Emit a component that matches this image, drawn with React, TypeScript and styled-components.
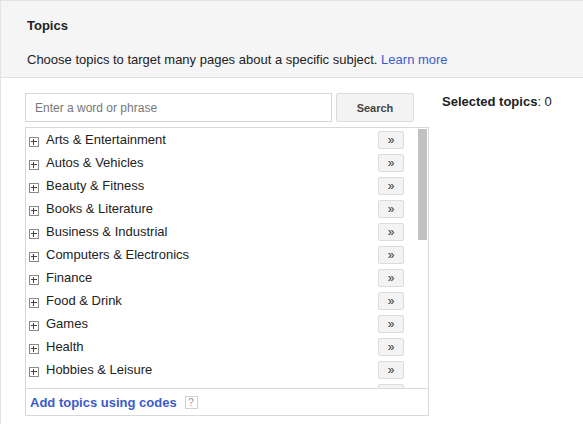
import React from "react";
import styled, { createGlobalStyle } from "styled-components";

const GlobalStyle = createGlobalStyle`
  html, body {
    margin: 0;
    padding: 0;
    background: #fff;
    overflow: hidden;
  }
  body {
    font-family: Arial, "Liberation Sans", sans-serif;
    color: #222;
  }
`;

const topics = [
  "Arts & Entertainment",
  "Autos & Vehicles",
  "Beauty & Fitness",
  "Books & Literature",
  "Business & Industrial",
  "Computers & Electronics",
  "Finance",
  "Food & Drink",
  "Games",
  "Health",
  "Hobbies & Leisure",
  "Home & Garden",
  "Internet & Telecom",
  "Jobs & Education",
  "Law & Government",
  "News",
  "Online Communities",
  "People & Society",
  "Pets & Animals",
  "Real Estate",
  "Reference",
  "Science",
  "Shopping",
  "Sports",
  "Travel",
  "World Localities",
];

const Card = styled.section`
  width: 600px;
  height: 440px;
  border: 1px solid #e3e3e3;
  box-sizing: border-box;
`;

const Header = styled.header`
  background: #f5f5f5;
  border-bottom: 1px solid #e0e0e0;
  padding: 16px 26px 8px;
`;

const Title = styled.h2`
  margin: 0;
  font-size: 13px;
  line-height: 18px;
  font-weight: bold;
  color: #222;
`;

const Description = styled.p`
  margin: 16px 0 0;
  font-size: 13px;
  line-height: 18px;
  color: #222;
`;

const Link = styled.a`
  color: #3b5bcc;
  text-decoration: none;
`;

const Body = styled.div`
  display: flex;
  align-items: flex-start;
  gap: 28px;
  padding: 15px 0 0 24px;
`;

const Picker = styled.div`
  display: flex;
  flex-direction: column;
  gap: 5px;
  width: 389px;
`;

const SearchRow = styled.div`
  display: flex;
  gap: 4px;
`;

const SearchInput = styled.input`
  box-sizing: border-box;
  width: 307px;
  height: 29px;
  border: 1px solid #d6d6d6;
  padding: 0 9px;
  font-family: Arial, "Liberation Sans", sans-serif;
  font-size: 12px;
  color: #222;
  outline: none;
  &::placeholder {
    color: #777;
  }
`;

const SearchButton = styled.button`
  box-sizing: border-box;
  width: 78px;
  height: 29px;
  background: #f3f3f3;
  border: 1px solid #dcdcdc;
  border-radius: 2px;
  font-family: Arial, "Liberation Sans", sans-serif;
  font-size: 11px;
  font-weight: bold;
  color: #444;
  padding: 0;
`;

const ListBox = styled.div`
  box-sizing: border-box;
  width: 404px;
  height: 289px;
  border: 1px solid #d9d9d9;
  display: flex;
  flex-direction: column;
`;

const ScrollArea = styled.div`
  display: flex;
  height: 260px;
`;

const TopicList = styled.ul`
  flex: 1;
  list-style: none;
  margin: 0;
  padding: 0;
  overflow: hidden;
`;

const Track = styled.div`
  width: 13px;
  background: #fff;
`;

const Thumb = styled.div`
  width: 9px;
  height: 111px;
  margin: 1px 0 0 3px;
  background: #c1c1c1;
`;

const Row = styled.li`
  display: flex;
  align-items: center;
  height: 23px;
  padding: 0 11px 1px 3px;
  box-sizing: border-box;
  font-size: 13px;
  color: #222;
`;

const Expander = styled.span`
  position: relative;
  box-sizing: border-box;
  width: 10px;
  height: 10px;
  margin: 6px 7px 0 0;
  border: 1px solid #8a8a8a;
  background: #fff;
  &::before,
  &::after {
    content: "";
    position: absolute;
    background: #444;
  }
  &::before {
    left: 1px;
    right: 1px;
    top: 3px;
    height: 1px;
  }
  &::after {
    top: 1px;
    bottom: 1px;
    left: 3px;
    width: 1px;
  }
`;

const RowLabel = styled.span`
  flex: 1;
`;

const AddButton = styled.button`
  box-sizing: border-box;
  width: 26px;
  height: 18px;
  margin-top: 1px;
  padding: 0;
  background: #f3f3f3;
  border: 1px solid #dcdcdc;
  border-radius: 2px;
  font-family: Arial, "Liberation Sans", sans-serif;
  font-size: 12px;
  line-height: 14px;
  color: #333;
`;

const Footer = styled.div`
  display: flex;
  align-items: center;
  gap: 8px;
  height: 26px;
  border-top: 1px solid #d9d9d9;
  padding-left: 4px;
`;

const FooterLink = styled.a`
  color: #3b5bcc;
  font-size: 13px;
  font-weight: bold;
  text-decoration: none;
`;

const HelpIcon = styled.span`
  box-sizing: border-box;
  width: 13px;
  height: 13px;
  border: 1px solid #d0d0d0;
  display: flex;
  align-items: center;
  justify-content: center;
  font-size: 10px;
  color: #999;
`;

const Selected = styled.div`
  margin-top: 1px;
  font-size: 13px;
  line-height: 16px;
  color: #222;
`;

export default function App() {
  return (
    <>
      <GlobalStyle />
      <Card>
        <Header>
          <Title>Topics</Title>
          <Description>
            Choose topics to target many pages about a specific subject.{" "}
            <Link href="#">Learn more</Link>
          </Description>
        </Header>
        <Body>
          <Picker>
            <SearchRow>
              <SearchInput placeholder="Enter a word or phrase" />
              <SearchButton>Search</SearchButton>
            </SearchRow>
            <ListBox>
              <ScrollArea>
                <TopicList>
                  {topics.map((t) => (
                    <Row key={t}>
                      <Expander />
                      <RowLabel>{t}</RowLabel>
                      <AddButton>»</AddButton>
                    </Row>
                  ))}
                </TopicList>
                <Track>
                  <Thumb />
                </Track>
              </ScrollArea>
              <Footer>
                <FooterLink href="#">Add topics using codes</FooterLink>
                <HelpIcon>?</HelpIcon>
              </Footer>
            </ListBox>
          </Picker>
          <Selected>
            <b>Selected topics</b>: 0
          </Selected>
        </Body>
      </Card>
    </>
  );
}
